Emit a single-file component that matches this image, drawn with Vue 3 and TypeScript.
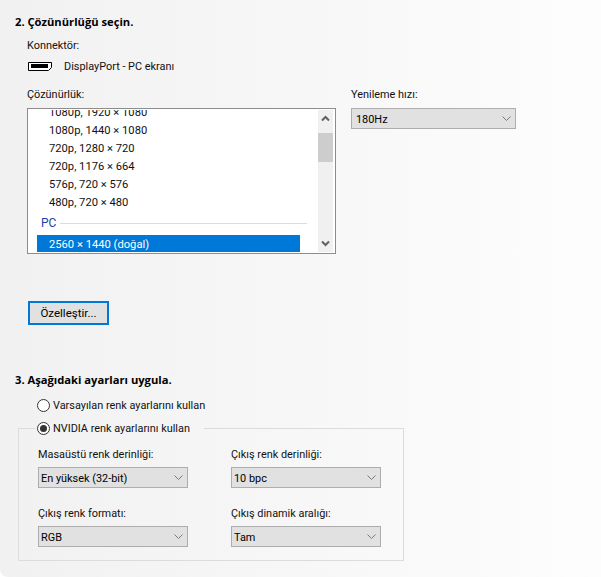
<script setup lang="ts">
// NVIDIA control panel: resolution and colour settings page
interface ColorField {
  label: string
  value: string
}

const modes: string[] = [
  '1080p, 1920 × 1080',
  '1080p, 1440 × 1080',
  '720p, 1280 × 720',
  '720p, 1176 × 664',
  '576p, 720 × 576',
  '480p, 720 × 480',
]

const colorFields: ColorField[] = [
  { label: 'Masaüstü renk derinliği:', value: 'En yüksek (32-bit)' },
  { label: 'Çıkış renk derinliği:', value: '10 bpc' },
  { label: 'Çıkış renk formatı:', value: 'RGB' },
  { label: 'Çıkış dinamik aralığı:', value: 'Tam' },
]
</script>

<template>
  <main class="page">
    <h2 class="heading">2. Çözünürlüğü seçin.</h2>

    <div class="connector">
      <div class="label">Konnektör:</div>
      <div class="connector__row">
        <svg class="connector__icon" width="24" height="9" viewBox="0 0 24 9">
          <path d="M0.5 0.5H23.5V5.5L20.5 8.5H0.5Z" fill="#fff" stroke="#000" />
          <rect x="3" y="2" width="17" height="4" fill="#000" />
        </svg>
        <span class="text">DisplayPort - PC ekranı</span>
      </div>
    </div>

    <div class="resolution">
      <div class="resolution__list">
        <div class="label">Çözünürlük:</div>
        <div class="listbox">
          <div class="listbox__items">
            <div class="listbox__scroll">
              <div v-for="mode in modes" :key="mode" class="listbox__row">{{ mode }}</div>
              <div class="listbox__group"><span>PC</span><i /></div>
              <div class="listbox__row listbox__row--selected">2560 × 1440 (doğal)</div>
            </div>
          </div>
          <div class="scrollbar">
            <svg width="15" height="17" viewBox="0 0 15 17">
              <path d="M4 10.5L7.5 7L11 10.5" fill="none" stroke="#606060" stroke-width="2" />
            </svg>
            <div class="scrollbar__track"><div class="scrollbar__thumb" /></div>
            <svg width="15" height="17" viewBox="0 0 15 17">
              <path d="M4 6.5L7.5 10L11 6.5" fill="none" stroke="#606060" stroke-width="2" />
            </svg>
          </div>
        </div>
      </div>

      <div class="resolution__rate">
        <div class="label">Yenileme hızı:</div>
        <div class="select">
          <span class="text">180Hz</span>
          <svg width="9" height="5" viewBox="0 0 9 5">
            <path d="M0.5 0.5L4.5 4.5L8.5 0.5" fill="none" stroke="#7a7a7a" />
          </svg>
        </div>
      </div>
    </div>

    <button class="customize">Özelleştir...</button>

    <h2 class="heading heading--apply">3. Aşağıdaki ayarları uygula.</h2>

    <div class="radio-line">
      <span class="radio" />
      <span class="text">Varsayılan renk ayarlarını kullan</span>
    </div>

    <fieldset class="group">
      <legend class="radio-line radio-line--legend">
        <span class="radio radio--checked" />
        <span class="text">NVIDIA renk ayarlarını kullan</span>
      </legend>
      <div class="group__grid">
        <div v-for="field in colorFields" :key="field.label" class="field">
          <div class="label">{{ field.label }}</div>
          <div class="select select--small">
            <span class="text">{{ field.value }}</span>
            <svg width="9" height="5" viewBox="0 0 9 5">
              <path d="M0.5 0.5L4.5 4.5L8.5 0.5" fill="none" stroke="#7a7a7a" />
            </svg>
          </div>
        </div>
      </div>
    </fieldset>
  </main>
</template>

<style>
html,
body {
  margin: 0;
  background: #fff;
}
</style>

<style scoped>
.page {
  box-sizing: border-box;
  width: 601px;
  height: 577px;
  padding: 14px 0 0 15px;
  overflow: hidden;
  background: linear-gradient(90deg, #f1f1f1 0%, #fdfdfd 100%);
  border-bottom-left-radius: 8px;
  font-family: Roboto, "Noto Sans", sans-serif;
  font-size: 10.9px;
  line-height: 16px;
  color: #111;
}

.heading {
  margin: 0;
  font-family: "Open Sans", sans-serif;
  font-size: 11.2px;
  font-weight: 700;
  line-height: 16px;
  color: #000;
}

.heading--apply {
  margin-top: 47px;
}

.label {
  height: 16px;
  line-height: 18px;
}

/* nudges the label down one pixel inside centred flex rows */
.text {
  padding-top: 2px;
}

.connector {
  margin: 7px 0 0 12px;
}

.connector__row {
  display: flex;
  align-items: center;
  gap: 12px;
  height: 16px;
  margin: 5px 0 0 1px;
}

.resolution {
  display: flex;
  gap: 15px;
  margin: 12px 0 0 12px;
}

.resolution__list .label,
.resolution__rate .label {
  margin-bottom: 6px;
}

.listbox {
  box-sizing: border-box;
  display: flex;
  width: 309px;
  height: 146px;
  padding: 1px 2px;
  background: #fff;
  border: 1px solid #8c8c8c;
}

.listbox__items {
  flex: 1;
  overflow: hidden;
}

.listbox__scroll {
  margin: -7px 11px 0 7px;
}

.listbox__row {
  height: 18px;
  padding-left: 12px;
  font-size: 11.2px;
  line-height: 20px;
}

.listbox__row--selected {
  width: 251px;
  color: #fff;
  background: #0078d7;
}

.listbox__group {
  display: flex;
  align-items: center;
  gap: 4px;
  height: 24px;
  padding: 0 0 0 4px;
  font-size: 12px;
  color: #1f3fa8;
}

.listbox__group i {
  flex: 1;
  height: 1px;
  background: #d5dde8;
}

.scrollbar {
  display: flex;
  flex-direction: column;
  width: 15px;
  background: #f0f0f0;
}

.scrollbar svg {
  display: block;
}

.scrollbar__track {
  flex: 1;
  padding-top: 6px;
}

.scrollbar__thumb {
  height: 29px;
  background: #cdcdcd;
}

.select {
  box-sizing: border-box;
  display: flex;
  align-items: center;
  justify-content: space-between;
  width: 165px;
  height: 21px;
  padding: 0 4px 0 4px;
  color: #000;
  background: #e1e1e1;
  border: 1px solid #adadad;
}

.select--small {
  width: 150px;
  padding-left: 2px;
}

.customize {
  display: block;
  box-sizing: border-box;
  width: 81px;
  height: 24px;
  margin: 47px 0 0 13px;
  padding: 0;
  font: inherit;
  font-size: 11.5px;
  color: #000;
  background: #e1e1e1;
  border: 2px solid #0078d7;
}

.radio-line {
  display: flex;
  align-items: center;
  gap: 3px;
  height: 16px;
  margin: 9px 0 0 22px;
  color: #111;
}

.radio-line--legend {
  margin: 0;
  padding: 0 14px 0 1px;
}

.radio {
  box-sizing: border-box;
  display: flex;
  align-items: center;
  justify-content: center;
  width: 13px;
  height: 13px;
  background: #fff;
  border: 1px solid #333;
  border-radius: 50%;
}

.radio--checked::after {
  content: "";
  width: 7px;
  height: 7px;
  background: #333;
  border-radius: 50%;
}

.group {
  box-sizing: border-box;
  width: 386px;
  height: 141px;
  margin: 7px 0 0 3px;
  padding: 0 0 0 19px;
  border: 1px solid #dcdcdc;
}

.group legend {
  margin-left: -2px;
}

.group__grid {
  display: grid;
  grid-template-columns: 150px 150px;
  column-gap: 43px;
  row-gap: 17px;
  margin-top: 10px;
}

.field .label {
  margin-bottom: 5px;
}
</style>
